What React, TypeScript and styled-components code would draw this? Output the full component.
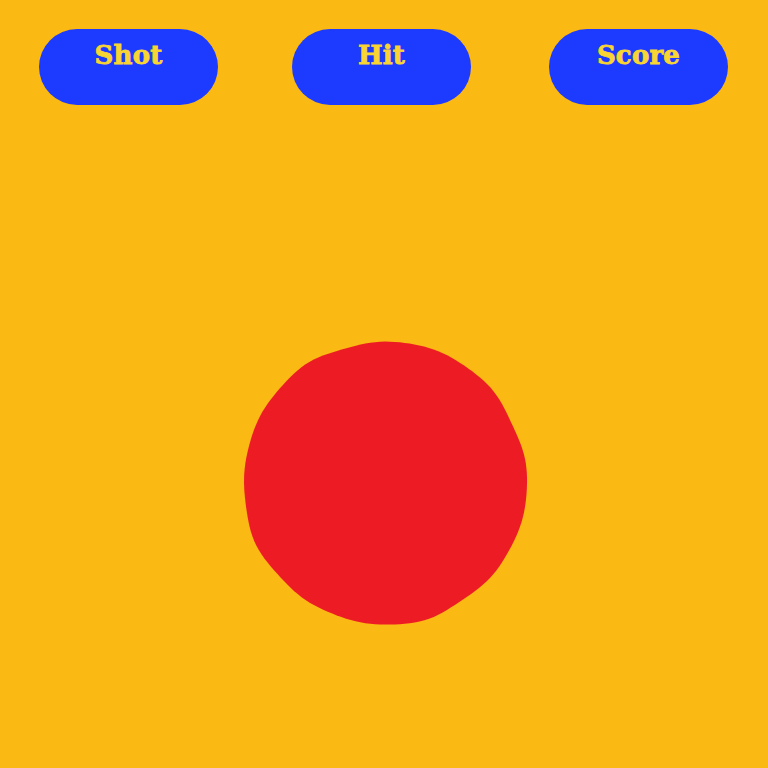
import React from "react";
import styled, { createGlobalStyle } from "styled-components";

const Global = createGlobalStyle`
  html, body { margin: 0; padding: 0; background: #fbb914; }
  body { width: 768px; height: 768px; overflow: hidden; }
`;

const Page = styled.div`
  width: 768px;
  height: 768px;
  background: #fbb914;
  display: flex;
  flex-direction: column;
  align-items: stretch;
`;

const Bar = styled.div`
  display: flex;
  justify-content: flex-start;
  gap: 74px;
  padding: 29px 0 0 39px;
`;

const Pill = styled.div<{ $shift?: number }>`
  width: 179px;
  height: 76px;
  margin-left: ${(p) => p.$shift ?? 0}px;
  box-sizing: border-box;
  border-radius: 38px;
  background: #1d3bff;
  color: #f9d532;
  font-family: "DejaVu Serif", "Liberation Serif", serif;
  font-weight: 700;
  font-size: 26px;
  letter-spacing: 0.2px;
  -webkit-text-stroke: 0.8px #f9d532;
  text-align: center;
  line-height: 1;
  padding-top: 13px;
`;

const Stage = styled.div`
  display: flex;
  justify-content: center;
  padding: 235px 0 0 2px;
`;

const Ball = styled.svg`
  display: block;
  width: 288px;
  height: 286px;
`;

function wobblyCircle(cx: number, cy: number, r: number): string {
  const pts: string[] = [];
  const n = 180;
  for (let i = 0; i < n; i++) {
    const a = (i / n) * Math.PI * 2;
    const w =
      0.7 * Math.sin(a * 5 + 0.7) +
      0.5 * Math.sin(a * 9 + 2.1) +
      0.4 * Math.sin(a * 13 + 4.2);
    const rr = r + w;
    pts.push(`${(cx + rr * Math.cos(a)).toFixed(2)},${(cy + rr * Math.sin(a)).toFixed(2)}`);
  }
  return "M" + pts.join(" L") + " Z";
}

export default function App() {
  return (
    <>
      <Global />
      <Page>
        <Bar>
          <Pill>Shot</Pill>
          <Pill>Hit</Pill>
          <Pill $shift={4}>Score</Pill>
        </Bar>
        <Stage>
          <Ball viewBox="0 0 288 286">
            <path d={wobblyCircle(144, 143, 141.5)} fill="#ed1c24" />
          </Ball>
        </Stage>
      </Page>
    </>
  );
}
